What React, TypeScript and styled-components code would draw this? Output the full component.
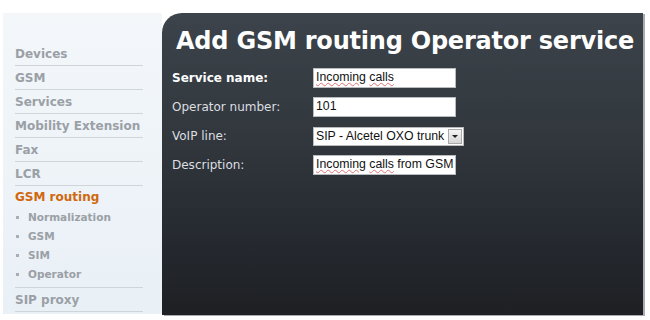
import React from "react";
import styled, { createGlobalStyle } from "styled-components";

const Global = createGlobalStyle`
  html, body { margin: 0; padding: 0; background: #ffffff; }
  body { width: 650px; height: 320px; overflow: hidden; }
`;

const Page = styled.div`
  display: flex;
  align-items: flex-start;
  padding: 13px 0 0 3px;
`;

const Sidebar = styled.nav`
  width: 159px;
  height: 301px;
  box-sizing: border-box;
  padding: 29px 0 0 12px;
  background: linear-gradient(#f3f7fa, #e9f0f6);
  font-family: "DejaVu Sans", Verdana, sans-serif;
`;

const NavList = styled.ul`
  list-style: none;
  margin: 0;
  padding: 0;
  width: 128px;
`;

const NavItem = styled.li<{ $active?: boolean }>`
  height: ${(p) => (p.$active ? "auto" : "24px")};
  line-height: 24px;
  border-bottom: 1px solid #cfd5db;
  box-sizing: border-box;
  font-size: 12px;
  font-weight: bold;
  color: #9aa0a6;
  white-space: nowrap;
`;

const ActiveLabel = styled.div`
  height: 22px;
  line-height: 22px;
  color: #d0680f;
`;

const SubList = styled.ul`
  list-style: none;
  margin: 0;
  padding: 0 0 4px 0;
`;

const SubItem = styled.li`
  display: flex;
  align-items: center;
  height: 18.75px;
  font-size: 10.5px;
  font-weight: bold;
  color: #9aa0a6;
  &::before {
    content: "";
    width: 3px;
    height: 3px;
    background: #a8aeb4;
    margin: 1px 9px 0 1px;
  }
`;

const Panel = styled.main`
  width: 481px;
  height: 302px;
  box-sizing: border-box;
  padding: 13px 0 0 10px;
  border-top-left-radius: 20px;
  background: linear-gradient(#3c434a 0%, #30363c 45%, #262a31 72%, #1e2023 100%);
  box-shadow: 2px 1px 0 #a9adb1;
`;

const Title = styled.h1`
  margin: 0 0 12px 4px;
  font-family: "DejaVu Sans", Verdana, sans-serif;
  font-weight: bold;
  font-size: 24px;
  line-height: 30px;
  letter-spacing: -0.22px;
  color: #ffffff;
  white-space: nowrap;
`;

const Form = styled.div`
  display: flex;
  flex-direction: column;
  gap: 9px;
`;

const Row = styled.div`
  display: flex;
  align-items: center;
  height: 20px;
`;

const Label = styled.div<{ $strong?: boolean }>`
  width: 141px;
  font-family: "DejaVu Sans", Verdana, sans-serif;
  font-size: 12px;
  font-weight: ${(p) => (p.$strong ? "bold" : "normal")};
  color: ${(p) => (p.$strong ? "#ffffff" : "#dcdee0")};
`;

const Field = styled.div`
  width: 143px;
  height: 20px;
  box-sizing: border-box;
  border: 1px solid #b9bcbf;
  background: #ffffff;
  padding: 0 2px;
  font-family: "Liberation Sans", Arial, sans-serif;
  font-size: 12.3px;
  line-height: 17px;
  color: #111;
  white-space: nowrap;
  overflow: hidden;
`;

const Misspelled = styled.span`
  text-decoration: underline wavy #e07070;
  text-decoration-thickness: 1px;
  text-underline-offset: 1px;
`;

const SelectBox = styled.div`
  width: 151px;
  height: 19px;
  box-sizing: border-box;
  border: 1px solid #b9bcbf;
  background: #ffffff;
  display: flex;
  align-items: center;
  justify-content: space-between;
  padding: 0 1px 0 2px;
  font-family: "Liberation Sans", Arial, sans-serif;
  font-size: 12.3px;
  color: #111;
  white-space: nowrap;
`;

const DropButton = styled.div`
  width: 14px;
  height: 15px;
  box-sizing: border-box;
  border: 1px solid #a9a9a9;
  background: linear-gradient(#f4f4f4, #d6d6d6);
  display: flex;
  align-items: center;
  justify-content: center;
  &::after {
    content: "";
    border-left: 3px solid transparent;
    border-right: 3px solid transparent;
    border-top: 3px solid #222;
  }
`;

const mainItems = ["Devices", "GSM", "Services", "Mobility Extension", "Fax", "LCR"];
const subItems = ["Normalization", "GSM", "SIM", "Operator"];

export default function App() {
  return (
    <>
      <Global />
      <Page>
        <Sidebar>
          <NavList>
            {mainItems.map((m) => (
              <NavItem key={m}>{m}</NavItem>
            ))}
            <NavItem $active>
              <ActiveLabel>GSM routing</ActiveLabel>
              <SubList>
                {subItems.map((s) => (
                  <SubItem key={s}>{s}</SubItem>
                ))}
              </SubList>
            </NavItem>
            <NavItem>SIP proxy</NavItem>
          </NavList>
        </Sidebar>
        <Panel>
          <Title>Add GSM routing Operator service</Title>
          <Form>
            <Row>
              <Label $strong>Service name:</Label>
              <Field>
                <Misspelled>Incoming</Misspelled> <Misspelled>calls</Misspelled>
              </Field>
            </Row>
            <Row>
              <Label>Operator number:</Label>
              <Field>101</Field>
            </Row>
            <Row>
              <Label>VoIP line:</Label>
              <SelectBox>
                <span>SIP - Alcetel OXO trunk</span>
                <DropButton />
              </SelectBox>
            </Row>
            <Row>
              <Label>Description:</Label>
              <Field>
                <Misspelled>Incoming</Misspelled> <Misspelled>calls</Misspelled> from GSM
              </Field>
            </Row>
          </Form>
        </Panel>
      </Page>
    </>
  );
}
